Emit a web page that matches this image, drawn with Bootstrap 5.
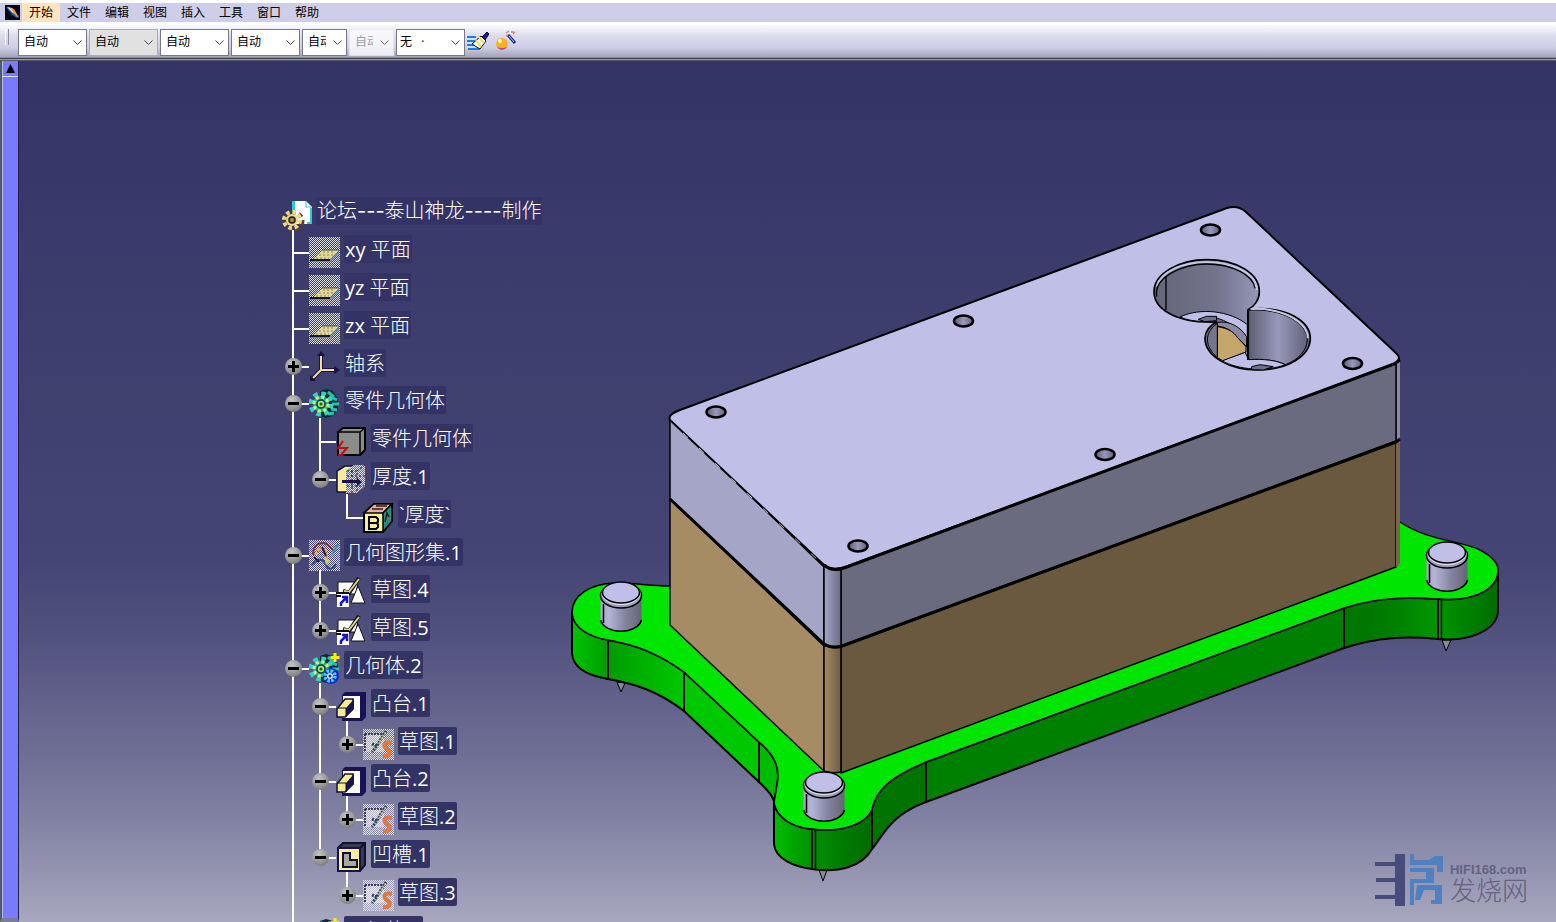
<!DOCTYPE html>
<html lang="zh-CN">
<head>
<meta charset="utf-8">
<meta name="viewport" content="width=device-width, initial-scale=1">
<title>论坛---泰山神龙----制作</title>
<link href="https://cdn.jsdelivr.net/npm/bootstrap@5.3.0/dist/css/bootstrap.min.css" rel="stylesheet">
<style>
  body { font-family: "Open Sans", "Noto Sans CJK SC", sans-serif; background: #a6a6be; }
  .app-menu { background: #cfcee8; border-top: 3px solid #fff; border-bottom: 3px solid #fff; height: 25px; padding-left: 5px; }
  .app-menu .nav-link { color: #000; font-size: 12px; line-height: 19px; padding: 0 7px; width: 38px; white-space: nowrap; }
  .app-menu .nav-link.active { background: #fbe3bd; }
  .app-logo { width: 15px; height: 15px; margin-right: 2px; }
  .app-tools { height: 32px; gap: 2px; padding: 4px 0 0 5px; background: linear-gradient(#fafafd, #dcdbee 35%, #cfcee8 70%, #a3a3b8); }
  .grip { width: 4px; height: 16px; margin-right: 7px; border-right: 1px solid #8d8da6; border-left: 1px solid #fff; }
  .app-tools select {
    appearance: none; width: 69px; height: 27px; flex: none; padding: 0 20px 1px 5px; border: 1px solid #77778a; border-radius: 0;
    font-size: 12px; color: #000;
    background: #fff url("data:image/svg+xml,%3Csvg xmlns='http://www.w3.org/2000/svg' width='9' height='6'%3E%3Cpath d='M.5 .5l4 4 4-4' fill='none' stroke='%23444'/%3E%3C/svg%3E") no-repeat right 4px center;
  }
  .app-tools select.muted { background-color: #e1e1e1; border-color: #adadad; }
  .app-tools select.slim { width: 45px; }
  .app-tools select.layer { padding-left: 3px; }
  .app-tools select:disabled { color: #8a8a8a; border-color: #eee; opacity: .75; }
  .tool-btn { width: 26px; height: 24px; padding: 0; border: 0; background: none; line-height: 1; text-align: left; }
  .tool-btn svg { width: 22px; height: 22px; }
  .rule { height: 4px; background: linear-gradient(#8f8fa0 25%, #3f3f50 25% 50%, #9a9aa8 50% 75%, #55555f 75%); }
  .work { background: linear-gradient(#333366, #38386a 15%, #40406f 38%, #454575 58%, #52527f 67%, #6b6b93 79%, #8484a5 89%, #a7a7bf); }
  .scroller { width: 19px; border-left: 2px solid #4c5b72; border-right: 1px solid #20204a; border-bottom: 4px solid #7c7c9c; background: #7a7aff; box-shadow: inset 1px 0 #b5b5d8; }
  .scroller button { height: 16px; border: 0; border-bottom: 1px solid #dcdcff; padding: 0; background: none; line-height: 1; }
  .tree-pane { width: 541px; padding: 134px 0 0 261px; }
  .tree-row { height: 38px; flex: none; }
  .tree-row:nth-child(5n) { height: 37px; }
  .cell { position: relative; width: 27px; flex: none; }
  .cell.v::before, .cell.e::before { content: ""; position: absolute; left: 12px; width: 2px; top: 0; bottom: 0; background: #fff; }
  .cell.e::before { bottom: 50%; }
  .cell.h::after { content: ""; position: absolute; left: 12px; right: -2px; top: 50%; height: 2px; background: #fff; }
  .node-toggle { position: absolute; z-index: 1; left: 5px; top: 11px; width: 17px; height: 17px; padding: 0; border: 0; border-radius: 50%; background: radial-gradient(circle at 40% 30%, #c4c4c4, #8a8a8a 65%, #606060); }
  .node-toggle::before, .node-toggle.plus::after { content: ""; position: absolute; background: #000; left: 3px; top: 7px; width: 11px; height: 3px; }
  .node-toggle.plus::after { left: 7px; top: 3px; width: 3px; height: 11px; }
  .pic { position: relative; flex: none; width: 31px; margin: 4px 4px 0 2px; }
  .pic svg { display: block; width: 31px; height: 31px; }
  .kids::after { content: ""; position: absolute; left: 10px; top: 30px; bottom: 0; width: 2px; background: #fff; }
  .root-pic { margin: 5px 3px 0 2px; }
  .node-label { height: 28px; margin-top: 2px; padding: 0 1px; border-radius: 2px; background: #333366; color: #fff; font: 20px/29px "Open Sans", "Noto Sans CJK SC Light", "Noto Sans CJK SC", sans-serif; text-decoration: none; white-space: nowrap; }
  .node-label:hover { color: #fff; }
  .root-label { font-family: Inter, "Noto Sans CJK SC Light", "Noto Sans CJK SC", sans-serif; }
  .faces { stroke: #000; stroke-width: 2; stroke-linejoin: round; }
  .brand-mark { right: 28px; bottom: 16px; gap: 7px; color: #646280; }
  .brand-host { font: bold 13px/13px "Liberation Sans", sans-serif; }
  .brand-name { font: 300 26px/26px "Noto Sans CJK SC", sans-serif; }
</style>
</head>
<body class="vh-100 d-flex flex-column overflow-hidden">

<svg width="0" height="0" class="position-absolute" aria-hidden="true">
  <defs>
    <pattern id="dots" width="2" height="2" patternUnits="userSpaceOnUse"><path d="M0 0h1v1h-1zM1 1h1v1h-1z" fill="#dedee4" shape-rendering="crispEdges"/></pattern>
    <symbol id="i-root" viewBox="0 0 31 31">
      <path d="M10 1h14l6 6v17H12z" fill="#fff"/><path d="M24 1v6h6" fill="none" stroke="#2fc9cf"/><path d="M10 1h3v9h-3zM28 8h2v16h-5v-2h3z" fill="#2fc9cf"/>
      <circle cx="12" cy="21" r="8" fill="none" stroke="#54482a" stroke-width="5" stroke-dasharray="4 3"/>
      <circle cx="10" cy="20" r="8" fill="none" stroke="#f0d98a" stroke-width="4" stroke-dasharray="3.500 2.800"/>
      <circle cx="10" cy="20" r="6" fill="#f0d98a"/><circle cx="10" cy="20" r="3" fill="#a08c3c" stroke="#201c10" stroke-width="1.500"/>
    </symbol>
    <symbol id="i-plane" viewBox="0 0 31 31">
      <path d="M0 0h31v31H0z" fill="url(#dots)"/>
      <path d="M4 22L13 13h17l-9 9z" fill="#e2d79a"/><path d="M4 22L13 13h17" fill="none" stroke="#53532e"/>
      <path d="M21 22l9-9v4l-8 8H2v-2z" fill="#5d86a0" opacity=".7"/><path d="M1 23h20" stroke="#15153c" stroke-width="2"/>
      <path d="M10 18h14M7 21h13M14 15h12" stroke="#8c813c" stroke-dasharray="2 2"/>
    </symbol>
    <symbol id="i-axis" viewBox="0 0 31 31">
      <path d="M12 4v15h15M12 19L3 28" fill="none" stroke="#18123c" stroke-width="4"/>
      <path d="M12 4v15h13M12 19L4 27" fill="none" stroke="#f0e0a0" stroke-width="2"/>
      <path d="M8 5l4-5 4 5zM25 15l6 4-6 4zM1 24v6h6z" fill="#18123c"/>
    </symbol>
    <symbol id="i-gear" viewBox="0 0 31 31">
      <path d="M11 3l6-2 7 2 5 8v10l-5 7-7 2-6-2z" fill="#0a2c33"/>
      <path d="M19 4l6 5M22 9l6 3M23 16h7M22 21l6 1M19 26l6-1" stroke="#2ac0b0" stroke-width="3"/>
      <circle cx="12" cy="16" r="10" fill="none" stroke="#36d3c4" stroke-width="5" stroke-dasharray="4.400 3.450"/>
      <circle cx="12" cy="16" r="8" fill="#20b5a5"/>
      <circle cx="12" cy="16" r="7" fill="none" stroke="#d8ec70" stroke-width="3" stroke-dasharray="3 2.500"/>
      <circle cx="12" cy="16" r="4" fill="#b8df58" stroke="#083a40" stroke-width="1.500"/><circle cx="12" cy="16" r="1.500" fill="#063"/>
    </symbol>
    <symbol id="i-body" viewBox="0 0 31 31">
      <path d="M2 6l5-4h22v22l-5 5H2z" fill="#8c8c88" stroke="#000" stroke-width="2"/>
      <path d="M2 6h22v23M24 6l5-4" fill="none" stroke="#000" stroke-width="1.500"/>
      <path d="M7 15l-5 7h9l-6 7M2 29h5" fill="none" stroke="#b81010" stroke-width="2"/>
    </symbol>
    <symbol id="i-thick" viewBox="0 0 31 31">
      <path d="M1 7l8-5h11l-7 5v21H1z" fill="#f4ec98" stroke="#101040" stroke-width="1.500"/>
      <path d="M10 7l8-6h11v21l-8 7H10z" fill="#4a78a8"/><path d="M10 7l8-6h11v21l-8 7H10z" fill="url(#dots)"/>
      <path d="M11 7h10v22M21 7l8-6M16 7v22M11 12h18M11 22h17" fill="none" stroke="#102040" stroke-dasharray="2 2"/>
      <path d="M6 16h15v-2l5 4-5 4v-3H6z" fill="#15154e"/>
    </symbol>
    <symbol id="i-block" viewBox="0 0 31 31">
      <path d="M1 11l10-9h18v17l-9 11H1z" fill="#f6eda0" stroke="#000" stroke-width="2"/>
      <path d="M1 11l10-9h18l-9 9z" fill="#e8b0a0" stroke="#000" stroke-width="1.500"/>
      <path d="M20 11l9-9v17l-9 11z" fill="#219080" stroke="#000" stroke-width="1.500"/>
      <path d="M6 15h7l2 2v3l-2 1 2 1v3l-2 2H6zM6 21h8" fill="none" stroke="#000" stroke-width="2"/>
      <path d="M9 7h11M22 20l2-9 2 4M13 4h11" fill="none" stroke="#301818" stroke-width="1.500"/>
    </symbol>
    <symbol id="i-set" viewBox="0 0 31 31">
      <path d="M0 0h31v31H0z" fill="url(#dots)"/>
      <path d="M4 15c0-8 4-12 10-12s7 6 12 8" fill="none" stroke="#803838" stroke-width="2"/>
      <path d="M7 15c2-8 8-8 10-4s-2 6 2 9" fill="none" stroke="#e2a84c" stroke-width="3" stroke-dasharray="3 1"/>
      <path d="M3 25c6-8 12-6 14 0s8 4 10-1" fill="none" stroke="#234f86" stroke-width="2"/>
      <path d="M28 3l2 3-6 9-2-1z" fill="#4592b4"/><path d="M15 17l6 4-4 4z" fill="#d5d25c"/><path d="M5 17l5 5M13 7l4 9" stroke="#301838" stroke-width="2"/>
    </symbol>
    <symbol id="i-sketch" viewBox="0 0 31 31">
      <path d="M2 5h20l-2 12H2z" fill="#fff" stroke="#111"/><path d="M22 9l7 17H15z" fill="#fff" stroke="#111"/>
      <path d="M23 1L13 16l-6-2" fill="none" stroke="#111" stroke-width="4"/><path d="M23 2L13 15l-5-1" fill="none" stroke="#d8d398" stroke-width="2"/>
      <path d="M1 17h12v13H1z" fill="#fff"/><path d="M0 16h13M0 19h5" stroke="#111" stroke-width="2"/>
      <path d="M5 29v-3l5-5M6 20h5v6" fill="none" stroke="#1414d4" stroke-width="2.500"/>
    </symbol>
    <symbol id="i-gear2" viewBox="0 0 31 31">
      <use href="#i-gear"/><circle cx="22" cy="23" r="8" fill="#0b2cc4"/>
      <circle cx="21" cy="23" r="5" fill="none" stroke="#55c4f4" stroke-width="3.500" stroke-dasharray="2.500 1.400"/><circle cx="21" cy="23" r="3" fill="#d8ecf8"/><circle cx="21" cy="23" r="1.500" fill="#003090"/>
      <path d="M26 0v9M21.500 4.500h9" stroke="#f8f000" stroke-width="3"/>
    </symbol>
    <symbol id="i-pad" viewBox="0 0 31 31">
      <path d="M6 4l3-3h21v25l-4 4H6z" fill="#181358"/><path d="M7 5h17v22H7z" fill="#fff"/>
      <path d="M1 18L9 8h8v10l-8 8H1z" fill="#f4ed90" stroke="#111030" stroke-width="1.500"/><path d="M10 17l8-9v10l-8 8z" fill="#181358"/><path d="M1 17h9v9" fill="none" stroke="#111030"/>
    </symbol>
    <symbol id="i-pocket" viewBox="0 0 31 31">
      <path d="M2 6l5-5h22v22l-5 6H2z" fill="#3c3c46" stroke="#101038" stroke-width="2"/>
      <path d="M2 6h22v23H2z" fill="#f8ef98" stroke="#151250" stroke-width="2"/>
      <path d="M7 11h7v7h7v7H7z" fill="#a8a8a0" stroke="#101038" stroke-width="2"/><path d="M24 6l5-5" stroke="#101038" stroke-width="2"/>
    </symbol>
    <symbol id="i-profile" viewBox="0 0 31 31">
      <path d="M0 0h31v31H0z" fill="url(#dots)"/><path d="M2 5h19v18H2z" fill="#fff" opacity=".4"/>
      <path d="M2 5h19M2 5v18" stroke="#16163c" stroke-width="1.500" stroke-dasharray="2 1"/>
      <path d="M23 2L13 18l-4 5M9 15l5 2" fill="none" stroke="#2c4558" stroke-width="3" stroke-dasharray="2 1"/><path d="M23 3l-7 11" stroke="#c4c48c"/>
      <path d="M29 14c-8-2-10 3-5 6s3 8-4 7" fill="none" stroke="#e07840" stroke-width="4"/><path d="M2 29h15" stroke="#a0c0d0" stroke-dasharray="2 2"/>
    </symbol>
  </defs>
</svg>

<nav class="app-menu d-flex align-items-center flex-shrink-0" aria-label="主菜单">
  <svg class="app-logo" viewBox="0 0 15 15" aria-hidden="true"><path d="M0 0h15v15H0z" fill="#050714"/><path d="M1 2l5 2 8 7-2 2-5-3z" fill="#1d5d9c"/><path d="M2 2l5 1 4 6-3-1z" fill="#fff"/><path d="M5 3l4 1 5 9-3-2z" fill="#f49a3c"/></svg>
  <div class="nav flex-nowrap">
    <a class="nav-link active" href="#">开始</a><a class="nav-link" href="#">文件</a><a class="nav-link" href="#">编辑</a><a class="nav-link" href="#">视图</a><a class="nav-link" href="#">插入</a><a class="nav-link" href="#">工具</a><a class="nav-link" href="#">窗口</a><a class="nav-link" href="#">帮助</a>
  </div>
</nav>

<div class="app-tools d-flex align-items-start flex-shrink-0" role="toolbar" aria-label="图形属性">
  <span class="grip"></span>
  <select aria-label="填充颜色"><option>自动</option></select>
  <select class="muted" aria-label="透明度"><option>自动</option></select>
  <select aria-label="线宽"><option>自动</option></select>
  <select aria-label="线型"><option>自动</option></select>
  <select class="slim" aria-label="点符号"><option>自动</option></select>
  <select class="slim" aria-label="渲染样式" disabled><option>自动</option></select>
  <select class="layer" aria-label="图层"><option>无&nbsp;&nbsp; ·</option></select>
  <button class="tool-btn" type="button" aria-label="格式刷"><svg viewBox="0 0 22 22"><path d="M0 7h9M0 11h8M0 15h11M1 19h12" stroke="#1480e8" stroke-width="2"/><path d="M0 9h8M0 13h8M0 17h12" stroke="#cfeefa"/><path d="M5 14l9-8 5 5-6 8z" fill="#fff" stroke="#111"/><path d="M9 10l5 7M12 7l5 6" stroke="#f0dc50" stroke-width="2"/><path d="M15 7l5-5 2 2-4 6z" fill="#15208c" stroke="#080c44"/></svg></button>
  <button class="tool-btn" type="button" aria-label="图形属性向导"><svg viewBox="0 0 22 22"><circle cx="7" cy="14" r="6" fill="#f4b41c"/><path d="M2 17a6 6 0 0 0 10 0q-5 2-10 0z" fill="#c038b0"/><circle cx="5" cy="11" r="2" fill="#fff2a0"/><path d="M13 5l7 8" stroke="#15208c" stroke-width="3"/><path d="M14 6l5 6" stroke="#bcd8f4"/><path d="M11 3l3-2M16 2h3M13 5l-2 1M18 4l2-2" stroke="#d88a60" stroke-width="1.500"/></svg></button>
</div>
<div class="rule flex-shrink-0"></div>

<main class="work d-flex flex-grow-1 position-relative overflow-hidden">
  <div class="scroller d-flex flex-column flex-shrink-0"><button type="button" aria-label="向上滚动"><svg class="d-block mx-auto" width="11" height="9" viewBox="0 0 11 9"><path d="M5.500 0L10 9H1z"/></svg></button></div>

  <section class="tree-pane flex-shrink-0" aria-label="结构树">
    <ul class="list-unstyled d-flex flex-column m-0">
      <li class="tree-row d-flex"><span class="pic root-pic kids"><svg><use href="#i-root"/></svg></span><a class="node-label root-label" href="#">论坛---泰山神龙----制作</a></li>
      <li class="tree-row d-flex"><span class="cell v h"></span><span class="pic"><svg><use href="#i-plane"/></svg></span><a class="node-label" href="#">xy 平面</a></li>
      <li class="tree-row d-flex"><span class="cell v h"></span><span class="pic"><svg><use href="#i-plane"/></svg></span><a class="node-label" href="#">yz 平面</a></li>
      <li class="tree-row d-flex"><span class="cell v h"></span><span class="pic"><svg><use href="#i-plane"/></svg></span><a class="node-label" href="#">zx 平面</a></li>
      <li class="tree-row d-flex"><span class="cell v h"><button class="node-toggle plus" aria-label="展开"></button></span><span class="pic"><svg><use href="#i-axis"/></svg></span><a class="node-label" href="#">轴系</a></li>
      <li class="tree-row d-flex"><span class="cell v h"><button class="node-toggle" aria-label="折叠"></button></span><span class="pic kids"><svg><use href="#i-gear"/></svg></span><a class="node-label" href="#">零件几何体</a></li>
      <li class="tree-row d-flex"><span class="cell v"></span><span class="cell v h"></span><span class="pic"><svg><use href="#i-body"/></svg></span><a class="node-label" href="#">零件几何体</a></li>
      <li class="tree-row d-flex"><span class="cell v"></span><span class="cell e h"><button class="node-toggle" aria-label="折叠"></button></span><span class="pic kids"><svg><use href="#i-thick"/></svg></span><a class="node-label" href="#">厚度.1</a></li>
      <li class="tree-row d-flex"><span class="cell v"></span><span class="cell"></span><span class="cell e h"></span><span class="pic"><svg><use href="#i-block"/></svg></span><a class="node-label" href="#">`厚度`</a></li>
      <li class="tree-row d-flex"><span class="cell v h"><button class="node-toggle" aria-label="折叠"></button></span><span class="pic kids"><svg><use href="#i-set"/></svg></span><a class="node-label" href="#">几何图形集.1</a></li>
      <li class="tree-row d-flex"><span class="cell v"></span><span class="cell v h"><button class="node-toggle plus" aria-label="展开"></button></span><span class="pic"><svg><use href="#i-sketch"/></svg></span><a class="node-label" href="#">草图.4</a></li>
      <li class="tree-row d-flex"><span class="cell v"></span><span class="cell e h"><button class="node-toggle plus" aria-label="展开"></button></span><span class="pic"><svg><use href="#i-sketch"/></svg></span><a class="node-label" href="#">草图.5</a></li>
      <li class="tree-row d-flex"><span class="cell v h"><button class="node-toggle" aria-label="折叠"></button></span><span class="pic kids"><svg><use href="#i-gear2"/></svg></span><a class="node-label" href="#">几何体.2</a></li>
      <li class="tree-row d-flex"><span class="cell v"></span><span class="cell v h"><button class="node-toggle" aria-label="折叠"></button></span><span class="pic kids"><svg><use href="#i-pad"/></svg></span><a class="node-label" href="#">凸台.1</a></li>
      <li class="tree-row d-flex"><span class="cell v"></span><span class="cell v"></span><span class="cell e h"><button class="node-toggle plus" aria-label="展开"></button></span><span class="pic"><svg><use href="#i-profile"/></svg></span><a class="node-label" href="#">草图.1</a></li>
      <li class="tree-row d-flex"><span class="cell v"></span><span class="cell v h"><button class="node-toggle" aria-label="折叠"></button></span><span class="pic kids"><svg><use href="#i-pad"/></svg></span><a class="node-label" href="#">凸台.2</a></li>
      <li class="tree-row d-flex"><span class="cell v"></span><span class="cell v"></span><span class="cell e h"><button class="node-toggle plus" aria-label="展开"></button></span><span class="pic"><svg><use href="#i-profile"/></svg></span><a class="node-label" href="#">草图.2</a></li>
      <li class="tree-row d-flex"><span class="cell v"></span><span class="cell e h"><button class="node-toggle" aria-label="折叠"></button></span><span class="pic kids"><svg><use href="#i-pocket"/></svg></span><a class="node-label" href="#">凹槽.1</a></li>
      <li class="tree-row d-flex"><span class="cell v"></span><span class="cell"></span><span class="cell e h"><button class="node-toggle plus" aria-label="展开"></button></span><span class="pic"><svg><use href="#i-profile"/></svg></span><a class="node-label" href="#">草图.3</a></li>
      <li class="tree-row d-flex"><span class="cell v h"></span><span class="pic"><svg><use href="#i-gear2"/></svg></span><a class="node-label" href="#">几何体.3</a></li>
    </ul>
  </section>

  <section class="flex-grow-1" aria-label="三维模型">
    <svg class="w-100 d-block" viewBox="560 61 996 861" role="img" aria-label="零件三维视图">
      <defs>
        <linearGradient id="gA"><stop stop-color="#00c400"/><stop offset="1" stop-color="#009c00"/></linearGradient>
        <linearGradient id="gB"><stop stop-color="#009c00"/><stop offset="1" stop-color="#00c800"/></linearGradient>
        <linearGradient id="gC"><stop stop-color="#00be00"/><stop offset="1" stop-color="#009000"/></linearGradient>
        <linearGradient id="gD"><stop stop-color="#009000"/><stop offset=".6" stop-color="#007800"/><stop offset="1" stop-color="#006c00"/></linearGradient>
        <linearGradient id="gE"><stop stop-color="#007600"/><stop offset=".4" stop-color="#007a00"/><stop offset="1" stop-color="#009600"/></linearGradient>
        <linearGradient id="gF"><stop stop-color="#009600"/><stop offset="1" stop-color="#006c00"/></linearGradient>
        <linearGradient id="gPeg"><stop stop-color="#a4a4c6"/><stop offset=".2" stop-color="#b4b4d8"/><stop offset=".6" stop-color="#8484a0"/><stop offset="1" stop-color="#646478"/></linearGradient>
        <linearGradient id="gL"><stop stop-color="#a4a4c8"/><stop offset="1" stop-color="#6b6b84"/></linearGradient>
        <linearGradient id="gT"><stop stop-color="#a58c64"/><stop offset="1" stop-color="#6d5c42"/></linearGradient>
        <linearGradient id="gH"><stop stop-color="#65657a"/><stop offset=".4" stop-color="#73738c"/><stop offset=".75" stop-color="#a0a0c4"/><stop offset="1" stop-color="#60607a"/></linearGradient>
        <linearGradient id="gK"><stop stop-color="#5e5e74"/><stop offset=".5" stop-color="#9898ba"/><stop offset="1" stop-color="#62627a"/></linearGradient>
        <g id="peg">
          <path d="M-20.500 2v26c4 14 37 14 41 0V2z" fill="url(#gPeg)" stroke="none"/>
          <path d="M-20.500 27c4 15 37 15 41 0M-17.500 11v19" fill="none" stroke-width="1.500"/>
          <ellipse cy="2.500" rx="20.500" ry="12.500" fill="#9c9cb8" stroke-width="1.500"/><ellipse cy=".5" rx="19.500" ry="11.500" fill="#dcdcf2" stroke="none"/><ellipse cy="-.5" rx="18.500" ry="10.500" fill="#c0bfe8" stroke-width="1.500"/>
        </g>
        <g id="bore"><ellipse rx="9.500" ry="5.500" fill="url(#gK)" stroke-width="2.500"/></g>
      </defs>
      <g class="faces">
        <g fill="#8a8a94" stroke-width="1"><path d="M617 682l4 10 4-9zM819 870l4 11 4-11zM1442 640l4 11 5-11z"/></g>
        <path fill="url(#gA)" d="M572 613C573 628 590 637 608 640V679C590 676 573 669 572 653z"/>
        <path fill="url(#gB)" d="M608 640C637 645 659 654 684 672V711C659 692 637 684 608 679z"/>
        <path fill="#00c800" d="M684 672L759 742V782L684 711z"/>
        <path fill="#00bc00" d="M759 742C777 757 780 770 777 785L774 801C772 796 770 792 759 782z"/>
        <path fill="url(#gC)" d="M774 803C777 819 795 828 812 829V869C795 867 775 859 774 844z"/>
        <path fill="url(#gD)" d="M812 829C840 833 867 824 872 809V849C862 867 838 873 812 869z"/>
        <path fill="#007400" d="M872 809C876 790 890 777 926 762V802C890 815 883 836 872 849z"/>
        <path fill="#008000" d="M926 762L1344 608V648L926 802z"/>
        <path fill="url(#gE)" d="M1344 608C1378 597 1406 597 1438 599V639C1406 636 1378 637 1344 648z"/>
        <path fill="url(#gF)" d="M1438 599C1480 602 1498 586 1498 570V612C1496 630 1470 642 1438 639z"/>
        <path stroke="none" fill="#00e600" d="M572 613C572 595 590 584 615 583C635 583 650 586 669 586L1400 522C1428 541 1460 540 1480 550C1493 557 1498 564 1498 570C1498 586 1480 602 1438 599C1406 597 1378 597 1344 608L926 762C890 777 876 790 872 809C867 824 840 833 812 829C795 828 777 819 774 803L777 785C780 770 777 757 759 742L684 672C659 654 637 645 608 640C590 637 573 628 572 613z"/>
        <path fill="none" d="M669 586C650 586 635 583 615 583C590 584 572 595 572 613C573 628 590 637 608 640C637 645 659 654 684 672L759 742C777 757 780 770 777 785L774 803C777 819 795 828 812 829C840 833 867 824 872 809C876 790 890 777 926 762L1344 608C1378 597 1406 597 1438 599C1480 602 1498 586 1498 570C1498 564 1493 557 1480 550C1460 540 1428 541 1400 522" stroke-width="1.500"/>
        <path d="M815.500 830v39M1441.500 600v39" fill="none" stroke-width="1.500"/>
        <path fill="#a58c64" stroke-width="1.500" d="M670 499L824 646V771L670 625z"/>
        <path fill="#6a593f" stroke-width="1.500" d="M841 647L1396 442V567L841 773z"/>
        <path fill="url(#gT)" stroke-width="1.500" d="M824 646h17v126q-9 2-17-1z"/>
        <path fill="#78664a" stroke="none" d="M1396 442l4-2v122q0 4-4 5z"/>
        <path fill="#a5a5c8" stroke-width="1.500" d="M670 418L824 567V645L670 499z"/>
        <path fill="#6b6b80" stroke-width="1.500" d="M841 568L1396 362V441L841 646z"/>
        <path fill="url(#gL)" stroke-width="1.500" d="M824 565h17v81q-9 3-17-1z"/>
        <path fill="#8a8a9e" stroke="none" d="M1397 362l3-3v80l-3 2z"/>
        <path fill="none" stroke-width="3" d="M670 499L824 644Q832 649 842 646L1396 442L1400 439"/>
        <path fill="#c0bfe8" d="M670 420Q667 415 680 410L1227 208Q1238 205 1246 212L1397 354Q1402 359 1394 364L848 566Q832 572 824 565z"/>
        <path fill="none" stroke-width="3" d="M1400 360L1394 364L844 568Q832 572 824 565"/>
        <path fill="none" stroke="#e8e8f8" stroke-width=".8" stroke-dasharray="7 15" d="M683 433L820 562"/>
        <use href="#bore" x="716" y="412"/><use href="#bore" x="963.500" y="321"/><use href="#bore" x="1210.500" y="230"/><use href="#bore" x="1352.500" y="363.500"/><use href="#bore" x="1105" y="454.500"/><use href="#bore" x="858" y="546"/>
        <g transform="translate(1130 190) scale(.3333)" stroke-width="5">
          <path fill="url(#gH)" d="M260 396C125 400 72 350 72 305C72 250 150 209 230 209C320 209 388 250 388 305C388 330 372 350 356 358C470 345 541 395 541 445C541 500 470 540 383 540C300 540 225 500 225 445C225 425 240 405 260 396z"/>
          <path fill="url(#gK)" d="M356 360C460 355 532 400 532 448C532 480 505 510 466 524C440 511 400 506 356 509z" stroke-width="3"/>
          <path fill="#c0bfe8" d="M275 512L345 487L356 509C400 506 440 511 466 524C410 546 325 540 275 512z" stroke-width="3"/>
          <path fill="#c0bfe8" d="M150 381C210 352 300 362 352 404V470C335 420 300 390 240 380L225 394Q180 395 150 381z" stroke-width="3"/>
          <path fill="#8a8aa6" d="M262 397C300 392 330 410 350 440V470L318 440Q300 412 262 408z" stroke-width="3"/>
          <path fill="#c4a56a" d="M262 410C295 415 310 425 322 442L348 470V486L278 512L262 503z" stroke-width="3"/>
          <path fill="#74748c" d="M262 400V503C225 470 220 430 262 400z" stroke-width="3"/>
          <path fill="#70708c" d="M205 388l25-9h30v13l-35 3zM365 530l25-6 40 6-30 10-35-1z" stroke-width="3"/>
          <path fill="none" stroke="#c8c8e4" stroke-width="6" d="M80 290C92 245 160 216 230 216C310 216 378 250 381 300M362 357C465 352 533 400 534 445"/>
          <path fill="none" d="M80 320C70 260 160 222 230 222C305 222 370 255 375 295M108 258V360M353 358V510" stroke-width="4"/>
        </g>
        <use href="#peg" x="621" y="593"/><use href="#peg" x="824" y="783"/><use href="#peg" x="1447" y="553"/>
      </g>
    </svg>
  </section>

  <div class="brand-mark position-absolute d-flex align-items-center">
    <svg width="68" height="52" viewBox="0 0 68 52" aria-hidden="true"><path d="M20 0h10v52H20zM0 8h20v4H0zM1 24h19v4H1zM0 41h20v4H0z" fill="#484c7c"/><path d="M35 0h4v6h15l6-4h11v16h-9v-7H35zM35 14h24v15H39v22h-4V25h16v-7H35zM42 31h25v19H56v-4h4V36H49l-4 10h-5z" fill="#4f80c0"/></svg>
    <div class="d-flex flex-column mt-1"><span class="brand-host">HIFI168.com</span><span class="brand-name">发烧网</span></div>
  </div>
</main>

<script src="https://cdn.jsdelivr.net/npm/bootstrap@5.3.0/dist/js/bootstrap.bundle.min.js"></script>
</body>
</html>
